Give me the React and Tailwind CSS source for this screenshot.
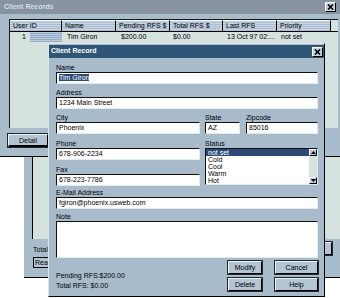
import React from "react";

const font = "font-['Liberation_Sans',Arial,sans-serif]";

function CloseBtn({ className = "" }) {
  return (
    <div className={`w-[11px] h-[10px] bg-[#c6d0da] border border-t-white border-l-white border-b-black border-r-black flex items-center justify-center ${className}`}>
      <svg width="7" height="6" viewBox="0 0 7 6">
        <path d="M1 0.5 L6 5.5 M6 0.5 L1 5.5" stroke="#000" strokeWidth="1.6" />
      </svg>
    </div>
  );
}

function Label({ children }) {
  return <div className="h-[9px] text-[7px] leading-[9px] text-black whitespace-nowrap">{children}</div>;
}

function Field({ children, className = "" }) {
  return (
    <div className={`h-[12px] bg-white border border-t-[#111] border-l-[#111] border-b-[#e4ebee] border-r-[#e4ebee] px-[2px] text-[7px] leading-[10px] text-black whitespace-nowrap overflow-hidden ${className}`}>
      {children}
    </div>
  );
}

function Btn({ children, className = "" }) {
  return (
    <div className={`h-[13px] bg-[#b3c4d3] border border-t-[#eef3f6] border-l-[#eef3f6] border-b-black border-r-black outline outline-1 outline-[#1c2a36] text-[7px] leading-[11px] text-center text-black ${className}`}>
      {children}
    </div>
  );
}

const cols = [
  { w: "w-[52px]", h: "User ID", v: "1", cls: "pl-[3px]" },
  { w: "w-[54px]", h: "Name", v: "Tim Giron", cls: "pl-[5px]" },
  { w: "w-[54px]", h: "Pending RFS $", v: "$200.00", cls: "pl-[5px]" },
  { w: "w-[53px]", h: "Total RFS $", v: "$0.00", cls: "pl-[3px]" },
  { w: "w-[54px]", h: "Last RFS", v: "13 Oct 97 02:...", cls: "pl-[4px]" },
  { w: "w-[54px]", h: "Priority", v: "not set", cls: "pl-[4px]" },
];

function RecordsWindow() {
  return (
    <div className="absolute left-0 top-0 z-20 w-[340px] h-[157px] bg-[#a9bccb] border-b border-black flex flex-col">
      <div className="h-[14px] bg-[#8793a0] flex items-center justify-between pl-[4px] pr-[4px]">
        <span className="text-[7px] font-bold text-[#d6dee6]">Client Records</span>
        <CloseBtn />
      </div>
      <div className="ml-[9px] mt-[5px] w-[329px] h-[109px] bg-[#d5e2de] border-t border-l border-[#1a1a1a]">
        <div className="flex h-[12px] border-b border-black">
          {cols.map((c) => (
            <div key={c.h} className={`${c.w} h-full bg-[repeating-linear-gradient(180deg,#c9d6e3_0px,#c9d6e3_1px,#a9bcd1_1px,#a9bcd1_2px)] border-r border-black border-t border-t-[#eef3f6] text-[7px] leading-[10px] text-black whitespace-nowrap overflow-hidden pl-[3px]`}>
              {c.h}
            </div>
          ))}
        </div>
        <div className="flex h-[10px] text-[7px] leading-[10px] text-black">
          <div className="w-[52px] flex">
            <span className="w-[20px] text-right pr-[4px]">1</span>
            <span className="flex-1 bg-[repeating-linear-gradient(180deg,#b8cadb_0px,#b8cadb_1px,#93abc4_1px,#93abc4_2px)]" />
          </div>
          {cols.slice(1).map((c) => (
            <div key={c.h} className={`${c.w} whitespace-nowrap overflow-hidden ${c.cls}`}>{c.v}</div>
          ))}
        </div>
      </div>
      <Btn className="ml-[8px] mt-[6px] w-[40px] border-b-2">Detail</Btn>
    </div>
  );
}

function BackWindow() {
  return (
    <div className="absolute left-[24px] top-[150px] z-10 w-[316px] h-[128px] bg-[#a9bccb] border-b border-black flex flex-col">
      <div className="ml-[8px] h-[89px] bg-[#d5e2de] border-l border-black" />
      <div className="flex justify-between items-start pl-[9px] pt-[6px]">
        <div className="flex flex-col gap-[3px] text-[7px] leading-[9px] text-black">
          <span>Total RFS: $0.00</span>
          <span className="border border-black bg-[#b3c4d3] px-[1px]">Ready</span>
        </div>
        <Btn className="w-[36px] mr-[8px] mt-[-3px]">Help</Btn>
      </div>
    </div>
  );
}

const statuses = ["Cold", "Cool", "Warm", "Hot"];

function Dialog() {
  return (
    <div className="absolute left-[48px] top-[43px] z-30 w-[277px] h-[254px] bg-[#a8bbcb] border border-t-[#dfe7ec] border-l-[#dfe7ec] border-b-black border-r-black flex flex-col">
      <div className="h-[13px] bg-[#2e5576] flex items-center justify-between pl-[2px] pr-[1px] mt-[1px]">
        <span className="text-[7px] font-bold text-white">Client Record</span>
        <CloseBtn />
      </div>
      <div className="pl-[7px] pr-[6px] pt-[5px] flex flex-col">
        <Label>Name</Label>
        <Field className="mb-[4px]">
          <span className="bg-[#2b4a78] text-white">Tim Giron</span>
        </Field>
        <Label>Address</Label>
        <Field className="mb-[4px]">1234 Main Street</Field>
        <div className="flex gap-[5px]">
          <div className="w-[144px] flex flex-col">
            <Label>City</Label>
            <Field className="mb-[5px]">Phoenix</Field>
            <Label>Phone</Label>
            <Field className="mb-[5px]">678-906-2234</Field>
            <Label>Fax</Label>
            <Field className="mb-[2px]">678-223-7786</Field>
          </div>
          <div className="flex-1 flex flex-col">
            <div className="flex gap-[6px]">
              <div className="w-[35px]">
                <Label>State</Label>
                <Field>AZ</Field>
              </div>
              <div className="flex-1">
                <Label>Zipcode</Label>
                <Field>85016</Field>
              </div>
            </div>
            <div className="mt-[5px]">
              <Label>Status</Label>
              <div className="h-[37px] bg-white border border-t-[#111] border-l-[#111] border-b-[#e4ebee] border-r-[#e4ebee] flex">
                <div className="flex-1 flex flex-col text-[7px] leading-[7px] text-black">
                  <span className="bg-[#2b4a78] text-white pl-[2px]">not set</span>
                  {statuses.map((s) => (
                    <span key={s} className="pl-[2px]">{s}</span>
                  ))}
                </div>
                <div className="w-[8px] bg-[#d5e2de] flex flex-col justify-between">
                  <div className="h-[7px] bg-[#b7c7d8] border border-t-white border-l-white border-b-black border-r-black flex items-center justify-center">
                    <svg width="5" height="3" viewBox="0 0 5 3"><path d="M0 3 L2.5 0 L5 3Z" fill="#000" /></svg>
                  </div>
                  <div className="h-[7px] bg-[#b7c7d8] border border-t-white border-l-white border-b-black border-r-black flex items-center justify-center">
                    <svg width="5" height="3" viewBox="0 0 5 3"><path d="M0 0 L2.5 3 L5 0Z" fill="#000" /></svg>
                  </div>
                </div>
              </div>
            </div>
          </div>
        </div>
        <Label>E-Mail Address</Label>
        <Field className="mb-[3px]">fgiron@phoenix.usweb.com</Field>
        <Label>Note</Label>
        <div className="h-[37px] bg-white border border-t-[#111] border-l-[#111] border-b-[#e4ebee] border-r-[#e4ebee]" />
        <div className="flex justify-between mt-[3px]">
          <div className="flex flex-col justify-end text-[7px] leading-[10px] text-black">
            <span>Pending RFS:$200.00</span>
            <span>Total RFS: $0.00</span>
          </div>
          <div className="grid grid-cols-[34px_43px] gap-x-[13px] gap-y-[4px]">
            <Btn>Modify</Btn>
            <Btn>Cancel</Btn>
            <Btn>Delete</Btn>
            <Btn>Help</Btn>
          </div>
        </div>
      </div>
    </div>
  );
}

export default function App() {
  return (
    <div className={`relative w-[340px] h-[298px] bg-white overflow-hidden ${font}`}>
      <RecordsWindow />
      <BackWindow />
      <Dialog />
    </div>
  );
}
